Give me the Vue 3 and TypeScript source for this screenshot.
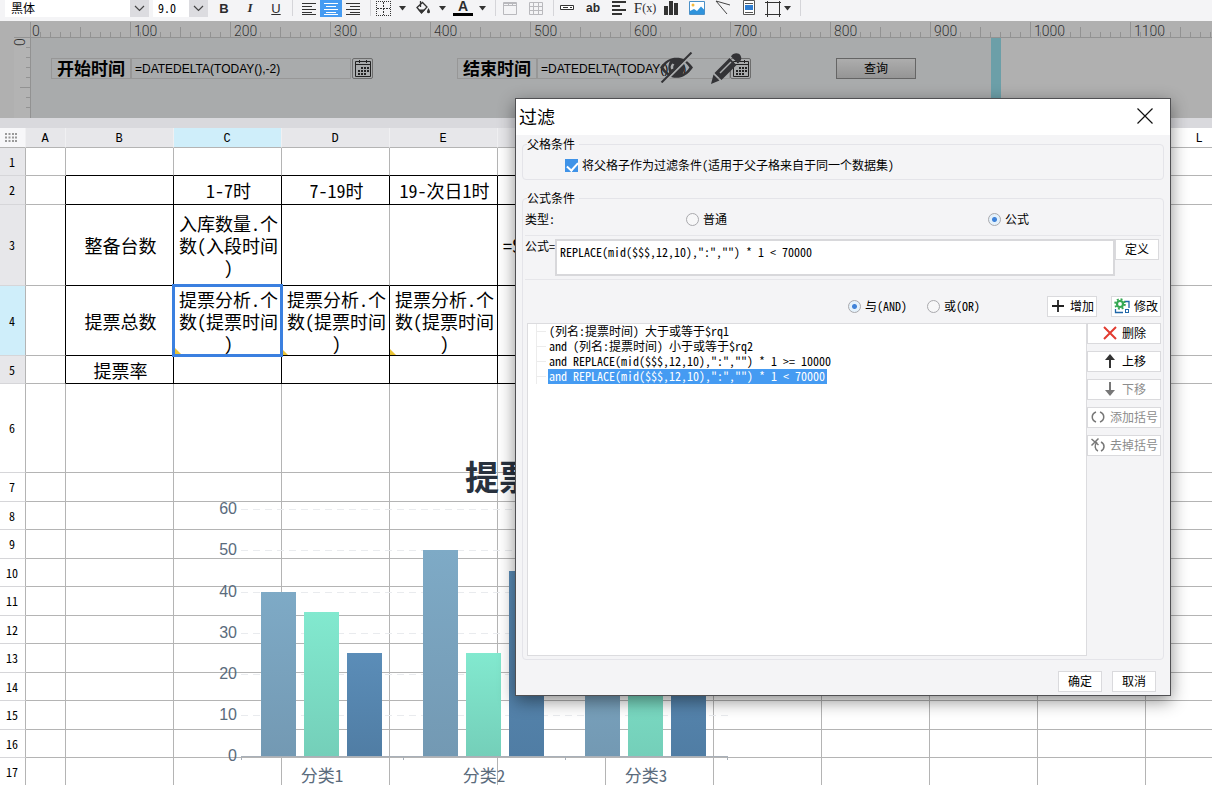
<script setup lang="ts">
import { ref } from 'vue'

interface Row {
  n: number
  h: number
  cells: Record<string, string>
}
interface Bar {
  x: number
  value: number
  fill: string
}

const columns = ['A', 'B', 'C', 'D', 'E', 'F', 'G', 'H', 'I', 'J', 'K', 'L']
const framed = ['B', 'C', 'D', 'E', 'F']
const analysis = '提票分析.个\n数(提票时间\n)'

const rows: Row[] = [
  { n: 1, h: 28, cells: {} },
  { n: 2, h: 29, cells: { C: '1-7时', D: '7-19时', E: '19-次日1时' } },
  { n: 3, h: 81, cells: { B: '整备台数', C: '入库数量.个\n数(入段时间\n)', F: '=S' } },
  { n: 4, h: 70, cells: { B: '提票总数', C: analysis, D: analysis, E: analysis } },
  { n: 5, h: 28, cells: { B: '提票率' } },
  { n: 6, h: 89, cells: {} },
  ...Array.from({ length: 11 }, (_, i) => ({ n: i + 7, h: i % 2 === 0 ? 29 : 28, cells: {} })),
]

function cellClass(r: Row, col: string) {
  return {
    'dark-bottom': r.n <= 5 && framed.includes(col),
    'dark-right': r.n >= 2 && r.n <= 5 && columns.indexOf(col) <= 5 && !(r.n === 3 && col === 'D'),
    picked: r.n === 4 && col === 'C',
    flagged: r.n === 4 && ['C', 'D', 'E'].includes(col),
    start: col === 'F',
  }
}

const ticks = Array.from({ length: 120 }, (_, i) => i)
const sideTicks = [1, 2, 3, 4, 5, 6, 7]

const axis = [0, 10, 20, 30, 40, 50, 60]
const baseY = 756
const top = 128
const yOf = (v: number) => baseY - top - Math.round(v * 4.11)
const bars: Bar[] = [
  { x: 261, value: 40, fill: 'url(#steel)' },
  { x: 304, value: 35, fill: 'url(#mint)' },
  { x: 347, value: 25, fill: 'url(#navy)' },
  { x: 423, value: 50, fill: 'url(#steel)' },
  { x: 466, value: 25, fill: 'url(#mint)' },
  { x: 509, value: 45, fill: 'url(#navy)' },
  { x: 585, value: 35, fill: 'url(#steel)' },
  { x: 628, value: 35, fill: 'url(#mint)' },
  { x: 671, value: 35, fill: 'url(#navy)' },
]
const categories = [
  { x: 322, text: '分类1' },
  { x: 484, text: '分类2' },
  { x: 646, text: '分类3' },
]

const font = ref('黑体')
const size = ref('9.0')
const startDate = ref('=DATEDELTA(TODAY(),-2)')
const endDate = ref('=DATEDELTA(TODAY(),-1)')
const inherit = ref(true)
const kind = ref('formula')
const logic = ref('and')
const formula = ref('REPLACE(mid($$$,12,10),":","") * 1 < 70000')
const selected = ref(3)
const conditions = [
  '(列名:提票时间) 大于或等于$rq1',
  'and (列名:提票时间) 小于或等于$rq2',
  'and REPLACE(mid($$$,12,10),":","") * 1 >= 10000',
  'and REPLACE(mid($$$,12,10),":","") * 1 < 70000',
]
</script>

<template>
  <div class="app">
    <header class="toolbar">
      <div class="combo font-combo">
        <select v-model="font" aria-label="字体"><option>黑体</option></select>
        <svg class="combo-arrow" viewBox="0 0 19 17"><path d="M5 6l4.500 4.500L14 6" /></svg>
      </div>
      <div class="combo size-combo">
        <select v-model="size" aria-label="字号"><option>9.0</option></select>
        <svg class="combo-arrow" viewBox="0 0 19 17"><path d="M5 6l4.500 4.500L14 6" /></svg>
      </div>
      <div class="group styles">
        <button class="tool wide bold" aria-label="加粗">B</button>
        <button class="tool wide italic" aria-label="斜体">I</button>
        <button class="tool wide under" aria-label="下划线">U</button>
      </div>
      <i class="sep"></i>
      <div class="group aligns">
        <button class="tool" aria-label="左对齐">
          <svg viewBox="0 0 16 16"><path class="ln" d="M1 2.500h14M1 5.500h10M1 8.500h14M1 11.500h10M1 13.500h14" /></svg>
        </button>
        <button class="tool active" aria-label="居中">
          <svg viewBox="0 0 16 16"><path class="ln light" d="M1 2.500h14M3 5.500h10M1 8.500h14M3 11.500h10M1 13.500h14" /></svg>
        </button>
        <button class="tool" aria-label="右对齐">
          <svg viewBox="0 0 16 16"><path class="ln" d="M1 2.500h14M5 5.500h10M1 8.500h14M5 11.500h10M1 13.500h14" /></svg>
        </button>
      </div>
      <i class="sep"></i>
      <div class="group fills">
        <button class="tool" aria-label="边框">
          <svg viewBox="0 0 16 16"><path class="ln" stroke-dasharray="1 1" d="M1 .5h15M1 14.500h15M1.500 0v15M15.500 0v15" /><path class="ln" stroke-dasharray="2 1" d="M2 7.500h13M8.500 1v13" /></svg>
        </button>
        <button class="caret" aria-label="更多边框"><svg viewBox="0 0 8 5"><path d="M0 0h7L3.500 4.500z" /></svg></button>
        <button class="tool" aria-label="填充">
          <svg viewBox="0 0 16 16"><path fill="none" stroke="#333" stroke-width="1.300" d="M2 6.500l5.500-5 4.500 4.500-5.500 6zM5.500 0v6" /><path fill="#333" d="M3 8.500h7.500l-4 4zM13.500 7c1 2 1.500 3 1.500 3.800a1.500 1.500 0 0 1-3 0c0-.8.5-1.800 1.500-3.800z" /></svg>
        </button>
        <button class="caret" aria-label="更多填充"><svg viewBox="0 0 8 5"><path d="M0 0h7L3.500 4.500z" /></svg></button>
        <button class="tool color" aria-label="字体颜色">A</button>
        <button class="caret" aria-label="更多颜色"><svg viewBox="0 0 8 5"><path d="M0 0h7L3.500 4.500z" /></svg></button>
      </div>
      <i class="sep"></i>
      <div class="group merges">
        <button class="tool" aria-label="合并单元格">
          <svg viewBox="0 0 16 16"><path class="gr" d="M1.500 1.500h13v12h-13zM1.500 4.500h13M6.500 1.500v3M10.500 1.500v3M1.500 2.500h13" /></svg>
        </button>
        <button class="tool" aria-label="拆分单元格">
          <svg viewBox="0 0 16 16"><path class="gr" d="M1.500 1.500h13v12h-13zM1.500 5.500h13M1.500 9.500h13M5.500 1.500v12M10.500 1.500v12" /></svg>
        </button>
      </div>
      <i class="sep"></i>
      <div class="group inserts">
        <button class="tool wide" aria-label="控件">
          <svg viewBox="0 0 16 16"><path class="ln" fill="#fff" d="M1.500 5.500h13v4h-13zM4 7.500h5M11 7.500h2" /></svg>
        </button>
        <button class="tool wide ab" aria-label="文本">ab</button>
        <button class="tool wide" aria-label="富文本">
          <svg viewBox="0 0 16 16"><path class="ln thick" d="M1 2h14M1 6h8M1 10h14M1 14h10" /></svg>
        </button>
        <button class="tool wide fx" aria-label="公式">F<small>(x)</small></button>
        <button class="tool wide" aria-label="图表">
          <svg viewBox="0 0 16 16"><path fill="#333" d="M1 6h4v9H1zM6 1h4v14H6zM11 3h4v12h-4z" /></svg>
        </button>
        <button class="tool wide" aria-label="图片">
          <svg viewBox="0 0 16 16"><path fill="#fff" stroke="#4a90c8" d="M.5 1.500h15v13H.5z" /><path fill="#2f93dc" d="M1 11l4-2 3 2 4-4.500 3 3V14H1z" /><circle cx="4" cy="5" r="1.500" fill="#f5b93a" /></svg>
        </button>
        <button class="tool wide" aria-label="斜线">
          <svg viewBox="0 0 16 16"><path fill="none" stroke="#444" d="M1 1l14 4M1 1l11 13" /></svg>
        </button>
        <button class="tool wide" aria-label="子报表">
          <svg viewBox="0 0 16 16"><path fill="#fff" stroke="#555" d="M2.500 .5h11v14h-11z" /><path fill="#2e7dd1" d="M4 5h8v5H4z" /><path stroke="#555" d="M4 3.500h8M4 12.500h8" /></svg>
        </button>
        <button class="tool" aria-label="形状">
          <svg viewBox="0 0 16 16"><path class="ln" fill="none" d="M2.500 1.500h12v12h-12zM0 1.500h16M2.500 0v16M14.500 0v16M0 13.500h16" /></svg>
        </button>
        <button class="caret slim" aria-label="更多形状"><svg viewBox="0 0 8 5"><path d="M0 0h7L3.500 4.500z" /></svg></button>
      </div>
      <i class="sep"></i>
    </header>

    <section class="params">
      <svg class="ruler" height="17">
        <g v-for="t in ticks" :key="t">
          <line :x1="30.5 + t * 10" :x2="30.5 + t * 10" :y1="t % 10 === 0 ? 1 : t % 5 === 0 ? 6 : 11" y2="16" />
          <text v-if="t % 10 === 0" :x="32 + t * 10 + (t ? 2 : 0)" y="15">{{ t * 10 }}</text>
        </g>
        <line x1="14" x2="100%" y1="16.5" y2="16.5" />
      </svg>
      <div class="pane">
        <svg class="side-ruler" width="31" height="80">
          <rect x="14" y="0" width="16" height="80" class="band" />
          <line x1="30.5" x2="30.5" y1="0" y2="80" />
          <line v-for="t in sideTicks" :key="t" :x1="t === 5 ? 20 : 26" x2="30" :y1="t * 10 - 0.5" :y2="t * 10 - 0.5" />
          <text transform="translate(14 8) rotate(-90)" x="0" y="11">0</text>
        </svg>
        <div class="canvas">
          <div class="field first">
            <label for="start">开始时间</label>
            <input id="start" v-model="startDate" />
            <button class="cal" aria-label="选择开始时间">
              <svg viewBox="0 0 18 18"><path fill="none" stroke="#222" d="M1.500 1.500h15v15h-15zM1.500 4.500h15M5.500 0v3M12.500 0v3" /><path stroke="#222" stroke-width="2" stroke-dasharray="2 1" d="M7 8h8M4 11h11M4 14h8" /></svg>
            </button>
          </div>
          <div class="field second">
            <label for="end">结束时间</label>
            <input id="end" v-model="endDate" />
            <button class="cal" aria-label="选择结束时间">
              <svg viewBox="0 0 18 18"><path fill="none" stroke="#222" d="M1.500 1.500h15v15h-15zM1.500 4.500h15M5.500 0v3M12.500 0v3" /><path stroke="#222" stroke-width="2" stroke-dasharray="2 1" d="M7 8h8M4 11h11M4 14h8" /></svg>
            </button>
            <svg class="eye" viewBox="0 0 32 30"><path fill="#333336" fill-rule="evenodd" d="M0 15C5 8 10 5.500 16 5.500S27 8 32 15c-5 7-10 10-16 10S5 22 0 15zm3.500 0c2 3 4 5 6.500 6.200C7.500 18 7.500 12 10 8.800 7.500 10 5.500 12 3.500 15zm25 0c-2-3-4-5-6.500-6.200 2.500 3.200 2.500 9.200 0 12.400 2.500-1.200 4.500-3.200 6.500-6.200zM12 11a5 5 0 0 0-1 6l2-1c-.5-2 0-3 1-4z" /><path stroke="#a9abac" stroke-width="2" d="M32 1.500L3.500 30" /><path stroke="#333336" stroke-width="2" d="M30.500 .5L1.500 29.500" /></svg>
            <svg class="pencil" viewBox="0 0 32 32"><path fill="#333336" d="M0 31l2.500-9.500 6 6zM3.500 20L18.500 5l7 7-15 15zM20 3.500c2-4 8-4 9.500-1s1 5-2.500 8z" /><path stroke="#a9abac" stroke-width="1.500" d="M9 20L20 9" /></svg>
          </div>
          <button class="query">查询</button>
        </div>
        <div class="handle"></div>
      </div>
    </section>
    <div class="split"></div>

    <main class="sheet">
      <table>
        <colgroup>
          <col class="c-head" />
          <col class="c-a" />
          <col v-for="c in columns.slice(1)" :key="c" class="c-data" />
        </colgroup>
        <thead>
          <tr>
            <th class="corner"><svg width="12" height="9"><path d="M1 0v9M4.500 0v9M8 0v9M11 0v9" /></svg></th>
            <th v-for="(c, i) in columns" :key="c" :class="{ used: i < 6, on: c === 'C' }">{{ c }}</th>
          </tr>
        </thead>
        <tbody>
          <tr v-for="r in rows" :key="r.n" :style="{ height: r.h + 'px' }">
            <th :class="{ used: r.n < 6, on: r.n === 4 }">{{ r.n }}</th>
            <td v-for="c in columns" :key="c" :class="cellClass(r, c)">{{ r.cells[c] }}</td>
          </tr>
        </tbody>
      </table>

      <svg class="chart" width="740" height="657">
        <defs>
          <linearGradient id="steel" x1="0" y1="0" x2="0" y2="1"><stop offset="0" stop-color="#7eaac6" /><stop offset="1" stop-color="#7399b3" /></linearGradient>
          <linearGradient id="mint" x1="0" y1="0" x2="0" y2="1"><stop offset="0" stop-color="#82e9cf" /><stop offset="1" stop-color="#74cfb9" /></linearGradient>
          <linearGradient id="navy" x1="0" y1="0" x2="0" y2="1"><stop offset="0" stop-color="#5b8db8" /><stop offset="1" stop-color="#507da4" /></linearGradient>
        </defs>
        <text class="title" x="465" y="362">提票</text>
        <g v-for="v in axis" :key="v">
          <line v-if="v" class="dash" x1="241" x2="728" :y1="yOf(v) + 0.5" :y2="yOf(v) + 0.5" />
          <text class="num" x="237" :y="yOf(v) + 5">{{ v }}</text>
        </g>
        <rect v-for="b in bars" :key="b.x" :x="b.x" :y="yOf(b.value)" width="35" :height="yOf(0) - yOf(b.value)" :fill="b.fill" />
        <path class="axis" d="M241 628.500h487M241.500 628v4M403.500 628v4M565.500 628v4M727.500 628v4" />
        <text v-for="c in categories" :key="c.x" class="cat" :x="c.x" y="654">{{ c.text }}</text>
      </svg>
    </main>

    <section class="dialog" role="dialog" aria-labelledby="dlg-title">
      <div class="titlebar">
        <h1 id="dlg-title">过滤</h1>
        <button class="close" aria-label="关闭"><svg viewBox="0 0 16 16"><path d="M.5 .5l15 15M15.500 .5l-15 15" /></svg></button>
      </div>
      <div class="body">
        <fieldset class="parent">
          <legend>父格条件</legend>
          <label class="check"><input v-model="inherit" type="checkbox" /><span>将父格子作为过滤条件(适用于父子格来自于同一个数据集)</span></label>
        </fieldset>
        <fieldset class="cond">
          <legend>公式条件</legend>
          <div class="kind">
            <span>类型:</span>
            <label class="radio"><input v-model="kind" type="radio" name="kind" value="plain" />普通</label>
            <label class="radio"><input v-model="kind" type="radio" name="kind" value="formula" />公式</label>
          </div>
          <div class="formula">
            <label for="formula">公式=</label>
            <textarea id="formula" v-model="formula" spellcheck="false"></textarea>
            <button class="btn define">定义</button>
          </div>
          <div class="logic">
            <label class="radio"><input v-model="logic" type="radio" name="logic" value="and" />与(AND)</label>
            <label class="radio"><input v-model="logic" type="radio" name="logic" value="or" />或(OR)</label>
            <div class="edits">
              <button class="btn"><svg viewBox="0 0 16 16"><path stroke="#222" stroke-width="1.800" d="M2 8h12M8 2v12" /></svg>增加</button>
              <button class="btn">
                <svg viewBox="0 0 16 16"><path fill="none" stroke="#1f66a8" stroke-width="1.300" d="M11 3.500h4V10M1.500 11v3.500H9" /><rect x="11.500" y="11.500" width="3" height="3" fill="none" stroke="#1f66a8" /><circle cx="6" cy="6" r="3" fill="none" stroke="#35a853" stroke-width="2.200" /><circle cx="6" cy="6" r="4.800" fill="none" stroke="#35a853" stroke-width="2" stroke-dasharray="1.900 1.870" /></svg>修改
              </button>
            </div>
          </div>
          <div class="lower">
            <ul class="tree">
              <li v-for="(c, i) in conditions" :key="c"><button :class="{ chosen: selected === i }" @click="selected = i">{{ c }}</button></li>
            </ul>
            <div class="side">
              <button class="btn"><svg viewBox="0 0 16 16"><path stroke="#e23b30" stroke-width="2" d="M2 2l12 12M14 2L2 14" /></svg>删除</button>
              <button class="btn"><svg viewBox="0 0 16 16"><path fill="none" stroke="#333" stroke-width="2" d="M8 15V3" /><path fill="#333" d="M8 1l5 6H3z" /></svg>上移</button>
              <button class="btn" disabled><svg viewBox="0 0 16 16"><path fill="none" stroke="#777" stroke-width="2" d="M8 1v12" /><path fill="#777" d="M8 15l5-6H3z" /></svg>下移</button>
              <button class="btn" disabled><svg viewBox="0 0 16 16"><path fill="none" stroke="#777" stroke-width="1.500" d="M6 3C1 5 1 11 6 13M10 3c5 2 5 8 0 10" /></svg>添加括号</button>
              <button class="btn" disabled><svg viewBox="0 0 16 16"><path fill="none" stroke="#777" stroke-width="1.500" d="M1.500 2l7 6M8.500 1.500l-7 7M7 5C4 8 5 13 8 14M11 5c4 2 4 7 0 9" /></svg>去掉括号</button>
            </div>
          </div>
        </fieldset>
      </div>
      <footer>
        <button class="btn">确定</button>
        <button class="btn">取消</button>
      </footer>
    </section>
  </div>
</template>

<style>
html, body { height: 100%; overflow: hidden; }
</style>

<style scoped>
.app {
  height: 100vh;
  position: relative;
  display: flex;
  flex-direction: column;
  overflow: hidden;
  background: #fff;
  color: #000;
  font: 12px/16px "Noto Sans Mono CJK SC", "Noto Sans CJK SC", monospace;
}
.app * { box-sizing: border-box; }
button, input, select, textarea { font: inherit; color: inherit; margin: 0; padding: 0; border: 0; border-radius: 0; background: none; outline: none; }

.toolbar { height: 21px; flex: none; display: flex; align-items: flex-start; padding-left: 5px; background: #f4f4f6; }
.combo { position: relative; height: 17px; background: #fff; }
.combo select { width: 100%; height: 16px; padding-left: 6px; appearance: none; display: block; line-height: 16px; }
.combo-arrow { position: absolute; right: 0; top: 0; width: 19px; height: 17px; background: #dcdce0; pointer-events: none; }
.combo-arrow path { fill: none; stroke: #444; stroke-width: 1.2px; }
.font-combo { width: 144px; }
.size-combo { width: 55px; margin-left: 4px; }
.size-combo select { padding-left: 5px; }
.group { display: flex; height: 17px; }
.sep { width: 1px; height: 16px; background: #d5d5d9; flex: none; }
.tool { width: 22px; height: 17px; display: flex; align-items: center; justify-content: center; color: #2c2c2e; }
.tool svg { width: 16px; height: 16px; }
.wide { width: 26px; padding-bottom: 1px; }
.active { background: #459bf2; }
.ln { stroke: #333; stroke-width: 1px; }
.thick { stroke-width: 2px; }
.light { stroke: #fff; }
.gr { fill: none; stroke: #b9b9bd; }
.bold { font: bold 13px "Liberation Sans", sans-serif; }
.italic { font: italic bold 13px "Liberation Serif", serif; }
.under { font: 13px "Liberation Sans", sans-serif; text-decoration: underline; }
.color { font: bold 14px/13px "Liberation Sans", sans-serif; border-bottom: 3px solid #000; width: 20px; height: 16px; margin: 0 1px; }
.ab { font: bold 12px "Liberation Sans", sans-serif; }
.fx { font: 15px "Liberation Serif", serif; }
.fx small { font-size: 12px; }
.caret { width: 14px; height: 17px; display: flex; align-items: center; justify-content: center; }
.caret svg { width: 8px; height: 5px; fill: #333; }
.slim { width: 8px; }
.styles { margin: 0 3px 0 3px; }
.aligns { margin: 0 6px 0 5px; }
.fills { margin: 0 5px 0 1px; gap: 2px; }
.merges { margin: 0 6px 0 3px; gap: 4px; }
.inserts { margin: 0 8px 0 0; }

.params { flex: none; height: 97px; background: #b0b0b0; display: flex; flex-direction: column; }
.ruler { width: 100%; height: 17px; flex: none; display: block; }
.ruler line, .side-ruler line { stroke: #929292; stroke-width: 1px; }
.ruler text, .side-ruler text { font: 300 14px Roboto, sans-serif; fill: #333; }
.band { fill: #b3b3b3; }
.pane { flex: 1; display: flex; }
.side-ruler { flex: none; }
.canvas { width: 960px; flex: none; display: flex; align-items: flex-start; padding: 20px 0 0 20px; background: #a9abac; }
.handle { width: 10px; background: #6c9fa8; }
.field { position: relative; display: flex; height: 21px; }
.field label { width: 80px; border: 1px solid #979797; font: bold 17px/18px "Noto Sans CJK SC", sans-serif; padding-left: 5px; white-space: nowrap; }
.field input { border: 1px solid #979797; padding-left: 3px; font: 12px "Liberation Sans", sans-serif; }
.first input { width: 220px; }
.second { margin-left: 84px; }
.second input { width: 193px; }
.cal { width: 21px; border: 1px solid #6d6d6d; border-radius: 2px; display: grid; place-items: center; }
.cal svg { width: 18px; height: 18px; }
.first .cal { margin-left: 1px; }
.eye { position: absolute; left: 203px; top: -6px; width: 33px; height: 31px; }
.pencil { position: absolute; left: 254px; top: -5px; width: 32px; height: 32px; }
.query { width: 80px; height: 21px; margin-left: 85px; padding-bottom: 2px; border: 1px solid #656565; background: linear-gradient(#adadad, #959595); }
.split { height: 10px; flex: none; background: #d9d9dd; }

.sheet { position: relative; flex: 1; overflow: hidden; }
table { width: 1254px; table-layout: fixed; border-collapse: separate; border-spacing: 0; }
.c-head { width: 26px; }
.c-a { width: 40px; }
.c-data { width: 108px; }
th, td { padding: 0; border-right: 1px solid #b4b4b4; border-bottom: 1px solid #b4b4b4; vertical-align: middle; text-align: center; }
th { font-weight: normal; line-height: 14px; padding-right: 1px; }
thead tr { height: 20px; }
thead th { border-right-color: #f0f0f2; font-family: "Liberation Mono", monospace; padding-top: 2px; }
thead .used, tbody .used { background: #e7e7ea; }
thead .on, tbody .on { background: #cfeefa; }
thead .corner { background: #f7f7f9; padding: 0; }
.corner svg { display: block; margin-left: 5px; }
.corner path { stroke: #999; stroke-width: 2px; stroke-dasharray: 2 1.5; }
tbody th { border-bottom-color: #d6d6d9; }
td { position: relative; padding-left: 2px; font: 18px/22px "Noto Sans Mono CJK SC", "Noto Sans CJK SC", monospace; white-space: pre-line; }
.dark-bottom { border-bottom-color: #000; }
.dark-right { border-right-color: #000; }
.start { text-align: left; padding-left: 5px; }
.flagged::before { content: ""; position: absolute; left: 0; bottom: 0; border: 3px solid transparent; border-left-color: #eac436; border-bottom-color: #eac436; }
.picked::before { left: 1px; bottom: 1px; z-index: 2; }
.picked::after { content: ""; position: absolute; left: -2px; top: -2px; right: -2px; bottom: -2px; border: 3px solid #3b80e0; z-index: 1; }
.chart { position: absolute; left: 0; top: 0; font-family: "Noto Sans Mono CJK SC", "Noto Sans CJK SC", sans-serif; }
.title { font: bold 34px "Noto Sans CJK SC", sans-serif; fill: #28313e; }
.num { font: 16px "Liberation Sans", sans-serif; fill: #5a6b7c; text-anchor: end; }
.cat { font-size: 17px; fill: #5a6b7c; text-anchor: middle; }
.dash { stroke: #e9ebee; stroke-dasharray: 7 5; }
.axis { fill: none; stroke: #a9b0b8; }

.dialog { position: absolute; top: 98px; right: 41px; width: 656px; background: #f4f4f6; border: 1px solid #505053; box-shadow: 0 5px 16px rgba(0, 0, 0, .45); }
.titlebar { height: 36px; background: #fff; display: flex; align-items: center; justify-content: space-between; padding: 0 17px 2px 3px; }
h1 { margin: 0; font: 18px/24px "Noto Sans CJK SC", sans-serif; }
.close { width: 16px; height: 16px; display: block; }
.close svg { display: block; width: 16px; height: 16px; }
.close path { stroke: #111; stroke-width: 1.2px; }
.body { padding: 2px 6px 0; }
fieldset { margin: 0; min-width: 0; padding: 0 2px; border: 1px solid #e4e4e9; border-radius: 4px; }
legend { margin-left: 2px; padding: 0 4px 0 0; height: 14px; line-height: 14px; }
.parent { margin-bottom: 11px; }
.check { display: flex; align-items: center; height: 28px; padding-left: 40px; gap: 4px; }
.check input { appearance: none; width: 13px; height: 13px; background: #3f93e8; position: relative; }
.check input:checked::after { content: ""; position: absolute; left: 4px; top: 1px; width: 5px; height: 9px; border: solid #fff; border-width: 0 2px 2px 0; transform: rotate(42deg); }
.radio { display: flex; align-items: center; gap: 4px; }
.radio input { appearance: none; width: 13px; height: 13px; border: 1px solid #a9a9ad; border-radius: 50%; background: #f7f7f8; flex: none; }
.radio input:checked { background: radial-gradient(circle, #3f82d8 0 2px, #e4f1fb 3px); }
.kind { height: 31px; display: grid; grid-template-columns: 161px 302px 1fr; align-items: center; padding-bottom: 2px; border-bottom: 1px solid #e6e6ea; }
.formula { display: flex; align-items: flex-start; height: 44px; padding-top: 3px; border-bottom: 1px solid #e6e6ea; }
.formula label { width: 30px; line-height: 14px; white-space: nowrap; }
.formula textarea { flex: 1; height: 37px; padding: 3px; resize: none; overflow: hidden; border: 2px solid #d8d8db; background: #fff; line-height: 15px; display: block; }
.btn { height: 21px; padding-bottom: 1px; border: 1px solid #dadadd; background: #fff; display: flex; align-items: center; justify-content: center; gap: 4px; white-space: nowrap; line-height: 16px; }
.btn svg { width: 16px; height: 16px; flex: none; }
.btn:disabled { color: #8c8c8c; }
.define { width: 44px; margin-right: 2px; }
.logic { display: flex; align-items: center; height: 43px; padding: 9px 0 0 323px; gap: 20px; }
.edits { flex: 1; display: flex; justify-content: flex-end; gap: 14px; }
.edits .btn { width: 50px; }
.lower { display: grid; grid-template-columns: 1fr 74px; margin-left: 2px; padding-bottom: 3px; }
.tree { height: 333px; margin: 0; padding: 0 0 0 8px; list-style: none; background: #fff; border: 1px solid #dcdcdf; }
.tree li { height: 15px; display: flex; align-items: center; border-left: 1px solid #ececec; }
.tree li::before { content: ""; width: 9px; height: 1px; margin-right: 2px; background: #ececec; }
.tree button { height: 15px; line-height: 13px; padding: 0 2px 2px 1px; white-space: pre; }
.tree .chosen { background: #459bf2; color: #fff; }
.side { display: flex; flex-direction: column; gap: 7px; }
footer { display: flex; justify-content: flex-end; gap: 10px; padding: 11px 14px 3px 0; }
footer .btn { width: 44px; }
</style>
